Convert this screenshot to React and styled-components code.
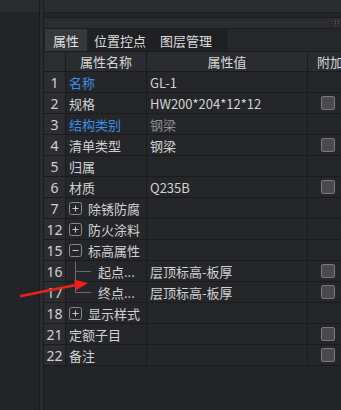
import React from "react";
import styled, { createGlobalStyle } from "styled-components";

const Global = createGlobalStyle`
  html, body { margin: 0; padding: 0; background: #232427; }
  body { font-family: "Noto Sans CJK SC", "Noto Sans", sans-serif; }
`;

const Page = styled.div`
  width: 341px;
  height: 410px;
  display: flex;
  overflow: hidden;
  background: #232427;
  position: relative;
`;

const LeftPanel = styled.div`
  width: 39px;
  flex: none;
  display: flex;
  flex-direction: column;
  background: #232427;
`;

const LeftTop = styled.div`
  height: 12px;
  background: #2b2c2f;
`;

const Splitter = styled.div`
  width: 3px;
  flex: none;
  background: #2a2b2e;
  border-left: 1px solid #1b1c1e;
  border-right: 1px solid #1b1c1e;
`;

const Main = styled.div`
  flex: 1;
  min-width: 0;
  display: flex;
  flex-direction: column;
`;

const TopBox = styled.div`
  height: 12px;
  background: #2b2c2f;
  border-bottom: 1px solid #1b1c1e;
`;

const Gap = styled.div`
  height: 4px;
  background: #232427;
`;

const TitleBar = styled.div`
  height: 10px;
  background: #2b2c2f;
  border-top: 1px solid #1b1c1e;
  border-bottom: 1px solid #1b1c1e;
  display: flex;
  justify-content: flex-end;
  align-items: center;
  padding-right: 2px;
`;

const Grip = styled.span`
  width: 2px;
  height: 6px;
  border-left: 1px dotted #555;
  border-right: 1px dotted #555;
`;

const TabBar = styled.div`
  height: 22px;
  display: flex;
  align-items: stretch;
  background: #1f2023;
  padding-left: 1px;
`;

const Tab = styled.div`
  padding: 0 ${(p) => (p.$active ? 8 : 7)}px;
  display: flex;
  align-items: center;
  font-size: 13px;
  color: ${(p) => (p.$active ? "#e2e2e2" : "#dcdcdc")};
  background: ${(p) => (p.$active ? "#36383b" : "transparent")};
  white-space: nowrap;
`;

const TabFill = styled.div`
  flex: 1;
  background: #26272a;
  border-left: 1px solid #1b1c1e;
  margin-left: 7px;
`;

const Table = styled.div`
  display: flex;
  flex-direction: column;
  width: 340px;
`;

const Row = styled.div`
  display: grid;
  grid-template-columns: 22px 81px 161px 76px;
  height: 21px;
  border-bottom: 1px solid #1a1b1d;
  box-sizing: border-box;
  background: #252629;
  font-size: 13px;
  color: #d2d2d2;
`;

const HeaderRow = styled(Row)`
  height: 21px;
  background: #2b2c30;
  border-top: 1px solid #1a1b1d;
  color: #d8d8d8;
`;

const Cell = styled.div`
  border-right: 1px solid #1a1b1d;
  display: flex;
  align-items: center;
  padding-left: ${(p) => p.$pad ?? 3}px;
  white-space: nowrap;
  overflow: hidden;
  position: relative;
  justify-content: ${(p) => (p.$center ? "center" : "flex-start")};
  color: ${(p) => p.$color || "inherit"};
`;

const NumCell = styled(Cell)`
  background: #2c2d31;
  justify-content: center;
  padding-left: 0;
  font-family: "Noto Sans", sans-serif;
  font-size: 14px;
`;

const HeadCell = styled(Cell)`
  justify-content: ${(p) => (p.$left ? "flex-start" : "center")};
  padding-left: ${(p) => (p.$left ? 9 : 0)}px;
`;

const Check = styled.span`
  width: 12px;
  height: 12px;
  border: 1px solid #7a7a7a;
  border-radius: 2px;
  background: #494a4c;
  margin-left: 13px;
`;

const ExpandBox = styled.svg`
  width: 13px;
  height: 13px;
  flex: none;
  margin-right: 6px;
`;

const Guide = styled.span`
  position: relative;
  width: 22px;
  height: 100%;
  flex: none;
  margin-left: 6px;
  margin-right: 4px;
  &::before {
    content: "";
    position: absolute;
    left: 3px;
    top: -1px;
    height: ${(p) => (p.$last ? "11px" : "22px")};
    border-left: 1px solid #6a6a6a;
  }
  &::after {
    content: "";
    position: absolute;
    left: 3px;
    top: 10px;
    width: 16px;
    border-top: 1px solid #6a6a6a;
  }
`;

const Arrow = styled.svg`
  position: absolute;
  left: 0;
  top: 0;
  pointer-events: none;
`;

const BLUE = "#3a8fe4";
const GREY = "#8c8c8c";

function Expander({ open }) {
  return (
    <ExpandBox viewBox="0 0 13 13">
      <rect x="0.5" y="0.5" width="12" height="12" rx="2" fill="none" stroke="#8a8a8a" />
      <line x1="3.5" y1="6.5" x2="9.5" y2="6.5" stroke="#c8c8c8" />
      {!open && <line x1="6.5" y1="3.5" x2="6.5" y2="9.5" stroke="#c8c8c8" />}
    </ExpandBox>
  );
}

const rows = [
  { n: "1", name: "名称", nameColor: BLUE, value: "GL-1" },
  { n: "2", name: "规格", value: "HW200*204*12*12", check: true },
  { n: "3", name: "结构类别", nameColor: BLUE, value: "钢梁", valueColor: GREY },
  { n: "4", name: "清单类型", value: "钢梁", check: true },
  { n: "5", name: "归属" },
  { n: "6", name: "材质", value: "Q235B", check: true },
  { n: "7", name: "除锈防腐", group: "closed" },
  { n: "12", name: "防火涂料", group: "closed" },
  { n: "15", name: "标高属性", group: "open" },
  { n: "16", name: "起点...", child: true, value: "层顶标高-板厚", check: true },
  { n: "17", name: "终点...", child: true, last: true, value: "层顶标高-板厚", check: true },
  { n: "18", name: "显示样式", group: "closed" },
  { n: "21", name: "定额子目", check: true },
  { n: "22", name: "备注", check: true },
];

export default function App() {
  return (
    <>
      <Global />
      <Page>
        <LeftPanel>
          <LeftTop />
        </LeftPanel>
        <Splitter />
        <Main>
          <TopBox />
          <Gap />
          <TitleBar>
            <Grip />
          </TitleBar>
          <TabBar>
            <Tab $active>属性</Tab>
            <Tab>位置控点</Tab>
            <Tab>图层管理</Tab>
            <TabFill />
          </TabBar>
          <Table>
            <HeaderRow>
              <NumCell />
              <HeadCell>属性名称</HeadCell>
              <HeadCell>属性值</HeadCell>
              <HeadCell $left>附加</HeadCell>
            </HeaderRow>
            {rows.map((r) => (
              <Row key={r.n}>
                <NumCell>{r.n}</NumCell>
                <Cell $color={r.nameColor} $pad={r.child ? 0 : 3}>
                  {r.group && <Expander open={r.group === "open"} />}
                  {r.child && <Guide $last={r.last} />}
                  {r.name}
                </Cell>
                <Cell $color={r.valueColor}>{r.value}</Cell>
                <Cell $pad={0}>{r.check && <Check />}</Cell>
              </Row>
            ))}
          </Table>
        </Main>
        <Arrow width="341" height="410" viewBox="0 0 341 410">
          <line x1="21" y1="296" x2="76" y2="285" stroke="#e8221b" strokeWidth="2.6" strokeLinecap="round" />
          <polygon points="88,283 74,279.5 76.5,290" fill="#e8221b" />
        </Arrow>
      </Page>
    </>
  );
}
